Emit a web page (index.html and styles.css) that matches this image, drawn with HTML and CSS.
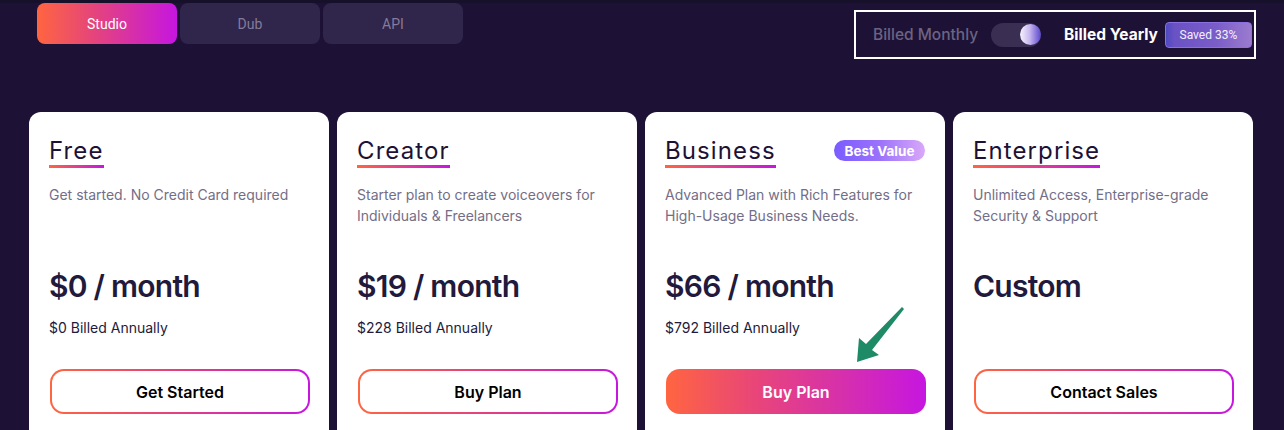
FILE: index.html
```html
<!DOCTYPE html>
<html lang="en">
<head>
<meta charset="utf-8">
<title>Pricing</title>
<link rel="stylesheet" href="styles.css">
</head>
<body>
<div class="page">
  <header class="top">
    <nav class="tabs">
      <button class="tab active">Studio</button>
      <button class="tab">Dub</button>
      <button class="tab">API</button>
    </nav>
    <div class="billing">
      <span class="bill-label">Billed Monthly</span>
      <span class="switch"><span class="knob"></span></span>
      <span class="bill-label on">Billed Yearly</span>
      <span class="saved">Saved 33%</span>
    </div>
  </header>

  <section class="plans">
    <article class="card">
      <div class="card-head"><h2 class="plan-name">Free</h2></div>
      <p class="desc">Get started. No Credit Card required</p>
      <div class="price">$0 / month</div>
      <div class="billed">$0 Billed Annually</div>
      <button class="cta outline"><span>Get Started</span></button>
    </article>
    <article class="card">
      <div class="card-head"><h2 class="plan-name">Creator</h2></div>
      <p class="desc">Starter plan to create voiceovers for Individuals &amp; Freelancers</p>
      <div class="price">$19 / month</div>
      <div class="billed">$228 Billed Annually</div>
      <button class="cta outline"><span>Buy Plan</span></button>
    </article>
    <article class="card">
      <div class="card-head"><h2 class="plan-name">Business</h2><span class="badge">Best Value</span></div>
      <p class="desc">Advanced Plan with Rich Features for High-Usage Business Needs.</p>
      <div class="price">$66 / month</div>
      <div class="billed">$792 Billed Annually</div>
      <button class="cta filled"><span>Buy Plan</span></button>
    </article>
    <article class="card">
      <div class="card-head"><h2 class="plan-name">Enterprise</h2></div>
      <p class="desc">Unlimited Access, Enterprise-grade Security &amp; Support</p>
      <div class="price">Custom</div>
      <div class="billed empty">&nbsp;</div>
      <button class="cta outline"><span>Contact Sales</span></button>
    </article>
  </section>

  <svg class="arrow" width="60" height="70" viewBox="850 300 60 70" aria-hidden="true">
    <polygon points="857,362 859,338 866,344 902,307 904,309 872,350 879,355" fill="#1f8a66"/>
  </svg>
</div>
</body>
</html>
```
FILE: styles.css
```css
* { box-sizing: border-box; }
html, body { margin: 0; padding: 0; }
body {
  background: #1d1236;
  font-family: Inter, "Liberation Sans", Arial, sans-serif;
  color: #221a3d;
  overflow: hidden;
}
.page {
  position: relative;
  width: 1284px;
  height: 430px;
  overflow: hidden;
  border-top: 3px solid #17102b;
}
.top {
  display: flex;
  justify-content: space-between;
  align-items: flex-start;
  padding-left: 37px;
  padding-right: 28px;
}
.tabs { display: flex; gap: 3px; }
.tab {
  width: 140px;
  height: 41px;
  border: 0;
  border-radius: 8px;
  background: #30254a;
  color: #857b9c;
  font-family: Roboto, "Liberation Sans", sans-serif;
  font-size: 14px;
  padding: 0;
}
.tab.active {
  background: linear-gradient(90deg, #ff6540 0%, #e5457a 40%, #c616e0 100%);
  color: #fff;
}
.billing {
  margin-top: 7px;
  width: 402px;
  height: 49px;
  border: 2px solid #fff;
  display: flex;
  align-items: center;
  padding-left: 17px;
}
.bill-label {
  font-size: 15.5px;
  font-weight: 500;
  color: #6c6382;
}
.bill-label.on {
  color: #fff;
  font-weight: 700;
  margin-left: 23px;
}
.switch {
  margin-left: 13px;
  width: 50px;
  height: 24px;
  border-radius: 12px;
  background: #3a2e52;
  position: relative;
}
.knob {
  position: absolute;
  right: 0;
  top: 0;
  width: 21px;
  height: 21px;
  margin-top: 1px;
  border-radius: 50%;
  background: linear-gradient(90deg, #f6f2ff 0%, #c9b9ef 45%, #8d79dd 75%, #5a48c9 100%);
}
.saved {
  margin-left: 7px;
  width: 87px;
  height: 26px;
  border-radius: 4px;
  border: 1px solid #8a70e0;
  background: linear-gradient(90deg, #4e49c2 0%, #6a52c4 10%, #7a5dc8 60%, #9b7bcf 100%);
  color: #f3efff;
  font-family: Roboto, "Liberation Sans", sans-serif;
  font-size: 12px;
  display: flex;
  align-items: center;
  justify-content: center;
}
.plans {
  display: flex;
  gap: 8px;
  padding-left: 29px;
  margin-top: 53px;
}
.card {
  width: 300px;
  height: 360px;
  background: #fff;
  border-radius: 12px;
  padding: 24px 20px 0 20px;
  display: flex;
  flex-direction: column;
}
.card-head {
  display: flex;
  justify-content: space-between;
  align-items: flex-start;
}
.plan-name {
  margin: 0;
  font-size: 24px;
  font-weight: 400;
  line-height: 29px;
  color: #1d1236;
  padding-bottom: 3px;
  letter-spacing: 1.1px;
  background: linear-gradient(90deg, #ff6540, #c616e0) no-repeat left bottom / 100% 3px;
}
.badge {
  margin-top: 4px;
  height: 21px;
  width: 91px;
  border-radius: 11px;
  background: linear-gradient(90deg, #7a5cff 0%, #9a72fb 50%, #d9a8f9 100%);
  color: #fff;
  font-size: 13.5px;
  font-weight: 700;
  display: flex;
  align-items: center;
  justify-content: center;
}
.desc {
  margin: 16px 0 0;
  font-size: 14px;
  line-height: 21px;
  color: #736e87;
  min-height: 42px;
}
.price {
  margin-top: 42px;
  font-size: 30px;
  line-height: 36px;
  font-weight: 600;
  letter-spacing: -0.75px;
  color: #221a3d;
}
.billed {
  margin-top: 13px;
  font-size: 14px;
  line-height: 21px;
  color: #221a3d;
}
.cta {
  margin-top: 31px;
  margin-left: 1px;
  width: 260px;
  height: 45px;
  border-radius: 14px;
  font-family: Inter, "Liberation Sans", sans-serif;
  font-size: 16px;
  font-weight: 600;
  cursor: pointer;
}
.cta.outline {
  border: 2px solid transparent;
  background:
    linear-gradient(#fff, #fff) padding-box,
    linear-gradient(90deg, #ff6540, #e33f80 50%, #c616e0) border-box;
  color: #000;
}
.cta.filled {
  border: 0;
  background: linear-gradient(90deg, #ff6540 0%, #e8457a 35%, #d52eb0 70%, #c616e0 100%);
  color: #fff;
}
.arrow {
  position: absolute;
  left: 850px;
  top: 297px;
}
```
